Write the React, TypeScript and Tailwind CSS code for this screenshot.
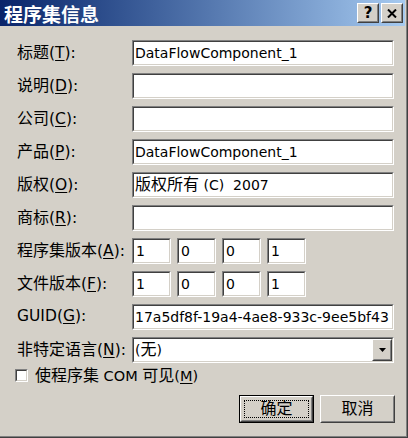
import React from "react";

const CJK_RE = /([\u3400-\u9fff\uff00-\uffef]+)/;

function Mixed({ text }: { text: string }) {
  const parts = text.split(CJK_RE);
  return (
    <>
      {parts.map((p, i) =>
        /[\u3400-\u9fff\uff00-\uffef]/.test(p) ? (
          <span key={i} className="text-[16px]">
            {p}
          </span>
        ) : (
          <span key={i}>{p}</span>
        )
      )}
    </>
  );
}

function Sunken({ children, className = "" }: { children?: React.ReactNode; className?: string }) {
  return (
    <div className={`border border-t-[#808080] border-l-[#808080] border-b-white border-r-white ${className}`}>
      <div className="h-full border border-t-[#404040] border-l-[#404040] border-b-[#d4d0c8] border-r-[#d4d0c8] bg-white flex items-center overflow-hidden">
        {children}
      </div>
    </div>
  );
}

function Raised({ children, className = "" }: { children?: React.ReactNode; className?: string }) {
  return (
    <div className={`border border-t-white border-l-white border-b-[#404040] border-r-[#404040] bg-[#d4d0c8] ${className}`}>
      <div className="h-full border border-t-[#d4d0c8] border-l-[#d4d0c8] border-b-[#808080] border-r-[#808080] flex items-center justify-center">
        {children}
      </div>
    </div>
  );
}

function Label({ cjk, k }: { cjk: string; k: string }) {
  return (
    <div className="w-[115px] shrink-0 whitespace-pre leading-none text-[15.5px]">
      <Mixed text={cjk} />(<u className="underline-offset-2">{k}</u>):
    </div>
  );
}

function TextRow({ cjk, k, value }: { cjk: string; k: string; value: string }) {
  return (
    <div className="flex items-center h-[26px]">
      <Label cjk={cjk} k={k} />
      <Sunken className="flex-1 h-[26px]">
        <span className="pl-[1px] whitespace-pre leading-none">
          <Mixed text={value} />
        </span>
      </Sunken>
    </div>
  );
}

function VersionRow({ cjk, k, values }: { cjk: string; k: string; values: string[] }) {
  return (
    <div className="flex items-center h-[26px]">
      <Label cjk={cjk} k={k} />
      <div className="flex gap-[6px]">
        {values.map((v, i) => (
          <Sunken key={i} className="w-[39px] h-[26px]">
            <span className="pl-[2px] leading-none">{v}</span>
          </Sunken>
        ))}
      </div>
    </div>
  );
}

export default function App() {
  return (
    <div className="w-[408px] h-[438px] border-r border-b border-r-[#404040] border-b-[#404040] font-['DejaVu_Sans','Noto_Sans_CJK_SC',sans-serif] text-[14px] text-black">
      <div className="w-full h-full border-r border-b border-r-[#808080] border-b-[#808080] bg-[#d4d0c8] flex flex-col">
        {/* Title bar */}
        <div className="h-[26px] mr-[1px] bg-linear-to-r from-[#0a246a] to-[#a6caf0] flex items-center pl-[4px] pr-[2px]">
          <span className="text-white font-bold text-[19px] leading-none font-['Noto_Sans_CJK_SC',sans-serif]">
            程序集信息
          </span>
          <div className="ml-auto flex gap-[2px]">
            <Raised className="w-[22px] h-[20px]">
              <span className="font-bold text-[15px] leading-none font-['DejaVu_Sans',sans-serif]">?</span>
            </Raised>
            <Raised className="w-[22px] h-[20px]">
              <svg width="10" height="9" viewBox="0 0 10 9">
                <path d="M1 0.5 L9 8.5 M9 0.5 L1 8.5" stroke="black" strokeWidth="2" />
              </svg>
            </Raised>
          </div>
        </div>

        {/* Body */}
        <div className="flex flex-col pl-[17px] pr-[12px] pt-[14px]">
          <div className="flex flex-col gap-[7px]">
            <TextRow cjk="标题" k="T" value="DataFlowComponent_1" />
            <TextRow cjk="说明" k="D" value="" />
            <TextRow cjk="公司" k="C" value="" />
            <TextRow cjk="产品" k="P" value="DataFlowComponent_1" />
            <TextRow cjk="版权" k="O" value="版权所有 (C)  2007" />
            <TextRow cjk="商标" k="R" value="" />
            <VersionRow cjk="程序集版本" k="A" values={["1", "0", "0", "1"]} />
            <VersionRow cjk="文件版本" k="F" values={["1", "0", "0", "1"]} />
            <TextRow cjk="GUID" k="G" value="17a5df8f-19a4-4ae8-933c-9ee5bf43" />
            <div className="flex items-center h-[26px]">
              <Label cjk="非特定语言" k="N" />
              <Sunken className="flex-1 h-[26px]">
                <span className="pl-[1px] leading-none flex-1">
                  <Mixed text="(无)" />
                </span>
                <Raised className="w-[20px] h-full">
                  <svg width="7" height="4" viewBox="0 0 7 4">
                    <path d="M0 0 H7 L3.5 4 Z" fill="black" />
                  </svg>
                </Raised>
              </Sunken>
            </div>
          </div>

          {/* Checkbox */}
          <div className="flex items-center h-[17px] mt-[4px] ml-[-2px]">
            <Sunken className="w-[13px] h-[13px]" />
            <span className="ml-[7px] whitespace-pre leading-none text-[14.5px]">
              <Mixed text="使程序集 COM 可见" />(<u className="underline-offset-2">M</u>)
            </span>
          </div>

          {/* Buttons */}
          <div className="flex justify-end gap-[6px] mt-[11px] mr-[-1px]">
            <div className="w-[75px] h-[28px] border border-black relative">
              <Raised className="w-full h-full">
                <span className="text-[16px] leading-none">确定</span>
              </Raised>
              <div className="absolute inset-[4px] border border-dotted border-black pointer-events-none" />
            </div>
            <Raised className="w-[75px] h-[28px]">
              <span className="text-[16px] leading-none">取消</span>
            </Raised>
          </div>
        </div>
      </div>
    </div>
  );
}
